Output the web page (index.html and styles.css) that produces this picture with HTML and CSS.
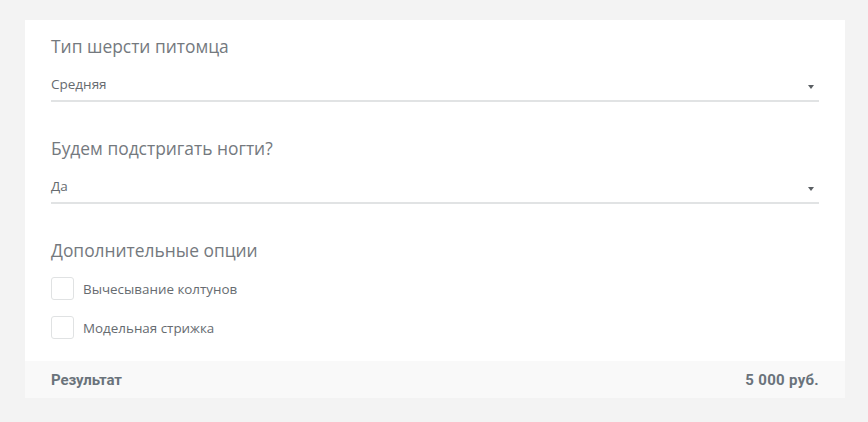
FILE: index.html
```html
<!DOCTYPE html>
<html lang="ru">
<head>
<meta charset="utf-8">
<title>Калькулятор</title>
<link rel="stylesheet" href="styles.css">
</head>
<body>
<div class="card">
  <div class="body">
    <div class="field">
      <div class="label">Тип шерсти питомца</div>
      <div class="select"><span>Средняя</span><i class="caret"></i></div>
    </div>
    <div class="field">
      <div class="label">Будем подстригать ногти?</div>
      <div class="select"><span>Да</span><i class="caret"></i></div>
    </div>
    <div class="field last">
      <div class="label">Дополнительные опции</div>
      <label class="check"><span class="box"></span><span>Вычесывание колтунов</span></label>
      <label class="check"><span class="box"></span><span>Модельная стрижка</span></label>
    </div>
  </div>
  <div class="footer">
    <span>Результат</span>
    <span class="sum">5 000 руб.</span>
  </div>
</div>
</body>
</html>
```
FILE: styles.css
```css
html, body {
  margin: 0;
  padding: 0;
  background: #f3f3f3;
}
body {
  padding: 20px 23px 25px 25px;
  font-family: "Open Sans", "Noto Sans", sans-serif;
}
.card {
  background: #fff;
  width: 820px;
}
.body {
  padding: 16px 26px 22px 26px;
}
.field {
  margin-bottom: 36px;
}
.field.last {
  margin-bottom: 0;
}
.label {
  font-size: 17.4px;
  line-height: 20px;
  color: #74797e;
  margin-bottom: 12px;
}
.select {
  height: 31px;
  border-bottom: 2px solid #e1e3e4;
  display: flex;
  align-items: center;
  justify-content: space-between;
  font-size: 13.5px;
  color: #666b70;
  padding-bottom: 1px;
  box-sizing: content-box;
}
.select span {
  margin-top: 1px;
}
.caret {
  width: 0;
  height: 0;
  border-left: 3.5px solid transparent;
  border-right: 3.5px solid transparent;
  border-top: 4px solid #5a5f63;
  margin-right: 5px;
  margin-top: 6px;
}
.check {
  display: flex;
  align-items: center;
  gap: 9px;
  font-size: 13.4px;
  color: #666b70;
  height: 23px;
  margin-top: 17px;
}
.check + .check {
  margin-top: 16px;
}
.box {
  border: 1.5px solid #e0e2e3;
  border-radius: 3px;
  box-sizing: border-box;
  width: 23px;
  height: 23px;
}
.footer {
  background: #f9f9f9;
  height: 37px;
  display: flex;
  align-items: center;
  justify-content: space-between;
  padding: 0 26px;
  font-family: "Roboto", "Open Sans", sans-serif;
  font-weight: 700;
  font-size: 15px;
  color: #6a737b;
  letter-spacing: -0.1px;
}
.sum {
  letter-spacing: 0.3px;
}
```
